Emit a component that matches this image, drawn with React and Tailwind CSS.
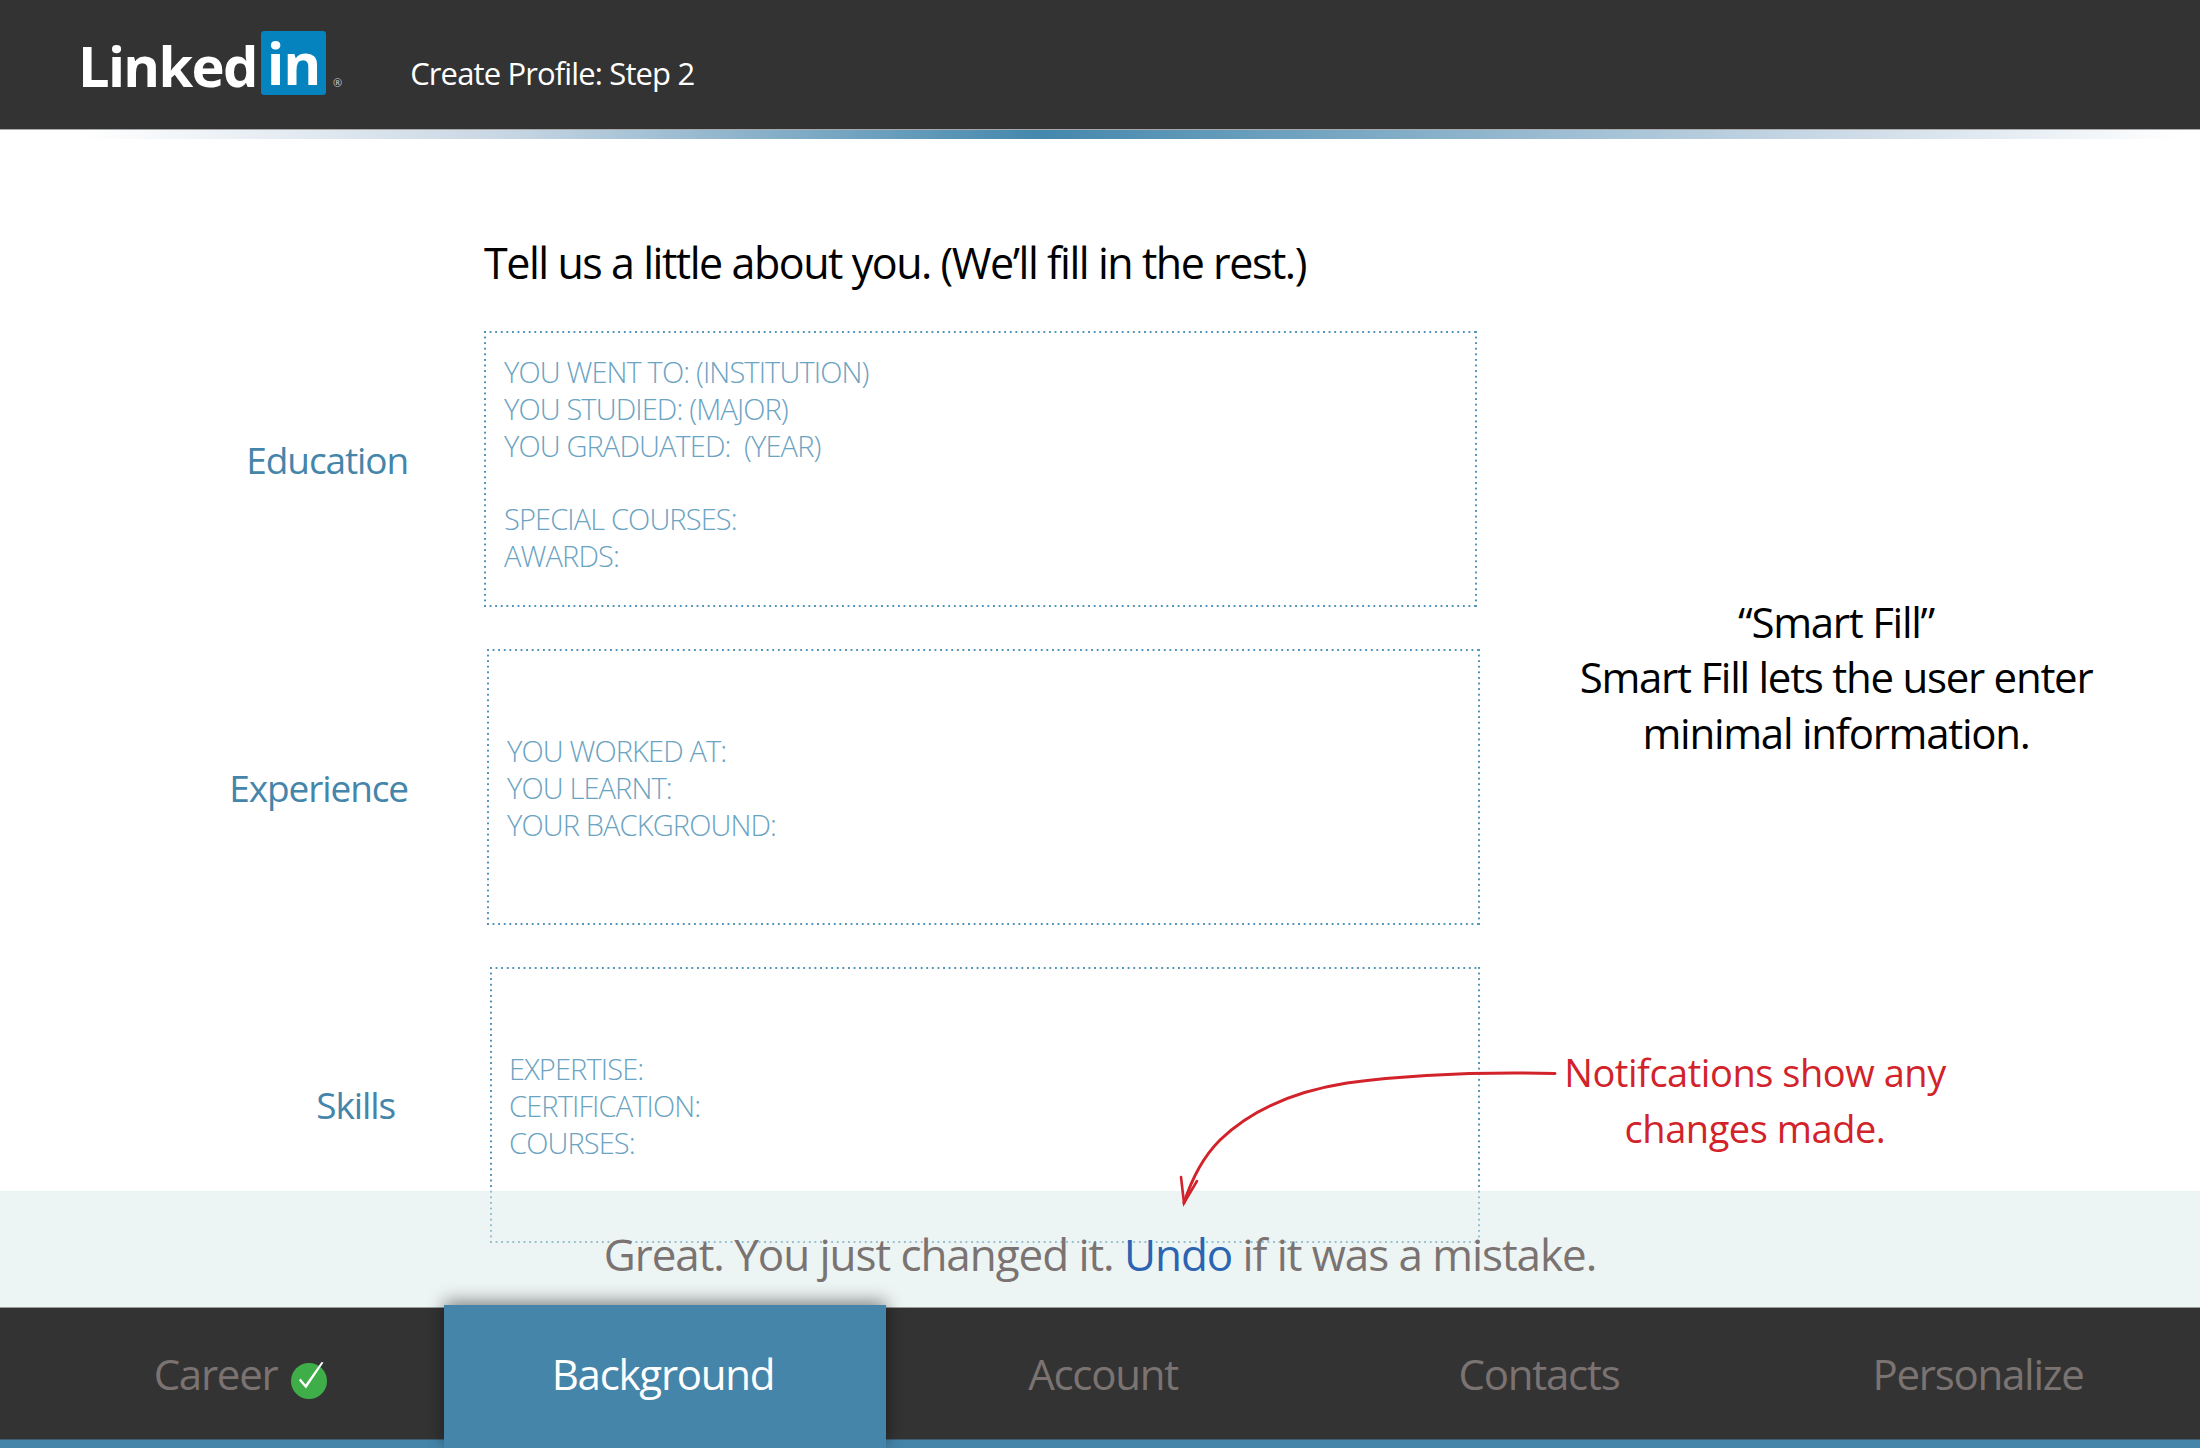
export default function App() {
  const dotted =
    "[background:linear-gradient(to_right,#4f93b8_2px,transparent_2px)_0_0/5.6px_2px_repeat-x,linear-gradient(to_right,#4f93b8_2px,transparent_2px)_0_100%/5.6px_2px_repeat-x,linear-gradient(to_bottom,#4f93b8_2px,transparent_2px)_0_0/2px_5.6px_repeat-y,linear-gradient(to_bottom,#4f93b8_2px,transparent_2px)_100%_0/2px_5.6px_repeat-y]";
  return (
    <div className="relative h-[1448px] w-[2200px] overflow-hidden bg-white [font-family:'Open_Sans',sans-serif]">
      <header className="flex h-[130px] items-start border-b border-[#a8a8a8] bg-[#333333] pl-[78px]">
        <div className="mt-[31px] flex items-start">
          <span className="mt-[-4px] w-[183px] text-[56px] leading-[76px] font-bold tracking-[-0.03em] text-white">Linked</span>
          <span className="flex h-[64px] w-[65px] justify-center rounded-[3px] bg-[#0583bf] text-[58px] leading-[64px] font-bold tracking-[-0.02em] text-white">in</span>
          <span className="mt-[46px] ml-[7px] text-[11px] leading-[12px] text-[#cccccc]">®</span>
        </div>
        <div className="mt-[51px] ml-[68px] text-[31px] leading-[44px] tracking-[-0.028em] text-white">Create Profile: Step 2</div>
      </header>
      <div className="h-[9px] bg-[linear-gradient(to_right,#ffffff_80px,#c9d7e4_500px,#4488ad_1040px,#c6d6e4_1800px,#ffffff_2180px)]" />

      <main className="flex h-[1052px]">
        <section className="w-[1480px] shrink-0">
          <h1 className="mt-[94px] ml-[484px] text-[43px] leading-[60px] tracking-[-0.034em] whitespace-nowrap text-black">Tell us a little about you. (We’ll fill in the rest.)</h1>

          <div className="mt-[38px] flex">
            <div className="mt-[104px] w-[408px] text-right text-[37px] leading-[50px] tracking-[-0.03em] text-[#4585aa]">Education</div>
            <div className={`ml-[76px] h-[276px] w-[993px] pt-[23px] pl-[20px] text-[29px] leading-[36.8px] font-light tracking-[-0.03em] text-[#6ba3c2] ${dotted}`}>
              <div>YOU WENT TO: (INSTITUTION)</div>
              <div>YOU STUDIED: (MAJOR)</div>
              <div className="whitespace-pre">YOU GRADUATED:  (YEAR)</div>
              <div className="h-[36.8px]" />
              <div>SPECIAL COURSES:</div>
              <div>AWARDS:</div>
            </div>
          </div>

          <div className="mt-[42px] flex">
            <div className="mt-[114px] w-[408px] text-right text-[37px] leading-[50px] tracking-[-0.03em] text-[#4585aa]">Experience</div>
            <div className={`ml-[79px] h-[276px] w-[993px] pt-[84px] pl-[20px] text-[29px] leading-[36.8px] font-light tracking-[-0.03em] text-[#6ba3c2] ${dotted}`}>
              <div>YOU WORKED AT:</div>
              <div>YOU LEARNT:</div>
              <div>YOUR BACKGROUND:</div>
            </div>
          </div>

          <div className="mt-[42px] flex">
            <div className="mt-[113px] w-[395px] text-right text-[37px] leading-[50px] tracking-[-0.03em] text-[#4585aa]">Skills</div>
            <div className={`ml-[95px] h-[276px] w-[990px] pt-[84px] pl-[19px] text-[29px] leading-[36.8px] font-light tracking-[-0.03em] text-[#6ba3c2] ${dotted}`}>
              <div>EXPERTISE:</div>
              <div>CERTIFICATION:</div>
              <div>COURSES:</div>
            </div>
          </div>
        </section>

        <aside className="flex-1 pt-[455px] pr-[8px] text-center">
          <div className="text-[42px] leading-[55.4px] tracking-[-0.03em] whitespace-nowrap text-black">
            <div>“Smart Fill”</div>
            <div>Smart Fill lets the user enter</div>
            <div>minimal information.</div>
          </div>
          <div className="mt-[284px] w-[550px] text-[38px] leading-[56px] tracking-[-0.012em] whitespace-nowrap text-[#d2232a]">
            <div>Notifcations show any</div>
            <div>changes made.</div>
          </div>
        </aside>
      </main>

      <div className="relative z-10 flex h-[116px] items-start justify-center bg-[#dbebe9]/50 pt-[33px] text-[44px] leading-[60px] tracking-[-0.024em] whitespace-nowrap text-[#7b7371]">
        <span>Great. You just changed it. <span className="text-[#2b64b0]">Undo</span> if it was a mistake.</span>
      </div>

      <nav className="relative z-10 h-[141px] border-t border-[#9a9a9a] bg-[#333333]">
        <div className="grid h-[131px] grid-cols-[444px_442px_438px_438px_438px] text-[42px] tracking-[-0.03em] text-[#7b7371]">
          <div className="flex items-start justify-center pt-[36px] pl-[38px] leading-[60px]">
            <span>Career</span>
            <svg className="mt-[17px] ml-[13px] h-[38px] w-[38px] shrink-0" viewBox="0 0 38 38">
              <circle cx="19" cy="20" r="18" fill="#3fae49" />
              <path d="M9 19.5 L16 27.5 L33.5 1.5 L31.5 1 L15.5 23.5 L10.5 17.5 Z" fill="#ffffff" />
            </svg>
          </div>
          <div className="z-10 mt-[-3px] h-[144px] bg-[#4585aa] pt-[39px] pr-[4px] text-center leading-[60px] text-white shadow-[0_-4px_16px_rgba(0,0,0,0.45)]">Background</div>
          <div className="pt-[36px] pr-[4px] text-center leading-[60px]">Account</div>
          <div className="pt-[36px] pr-[8px] text-center leading-[60px]">Contacts</div>
          <div className="pt-[36px] pr-[6px] text-center leading-[60px]">Personalize</div>
        </div>
        <div className="h-[10px] border-t border-[#3d5f75] bg-[#4585aa]" />
      </nav>

      <svg className="absolute top-[1060px] left-[1170px] z-20 h-[160px] w-[400px]" viewBox="0 0 400 160" fill="none" stroke="#d2232a" strokeLinecap="round">
        <path d="M385 13.5 C340 12.5 260 12 177 23 C120 32 78 53 50 80 C32 98 22 118 14 143" strokeWidth="3" />
        <path d="M11 117 L14 143 L27 121" strokeWidth="2.6" />
      </svg>
    </div>
  );
}
